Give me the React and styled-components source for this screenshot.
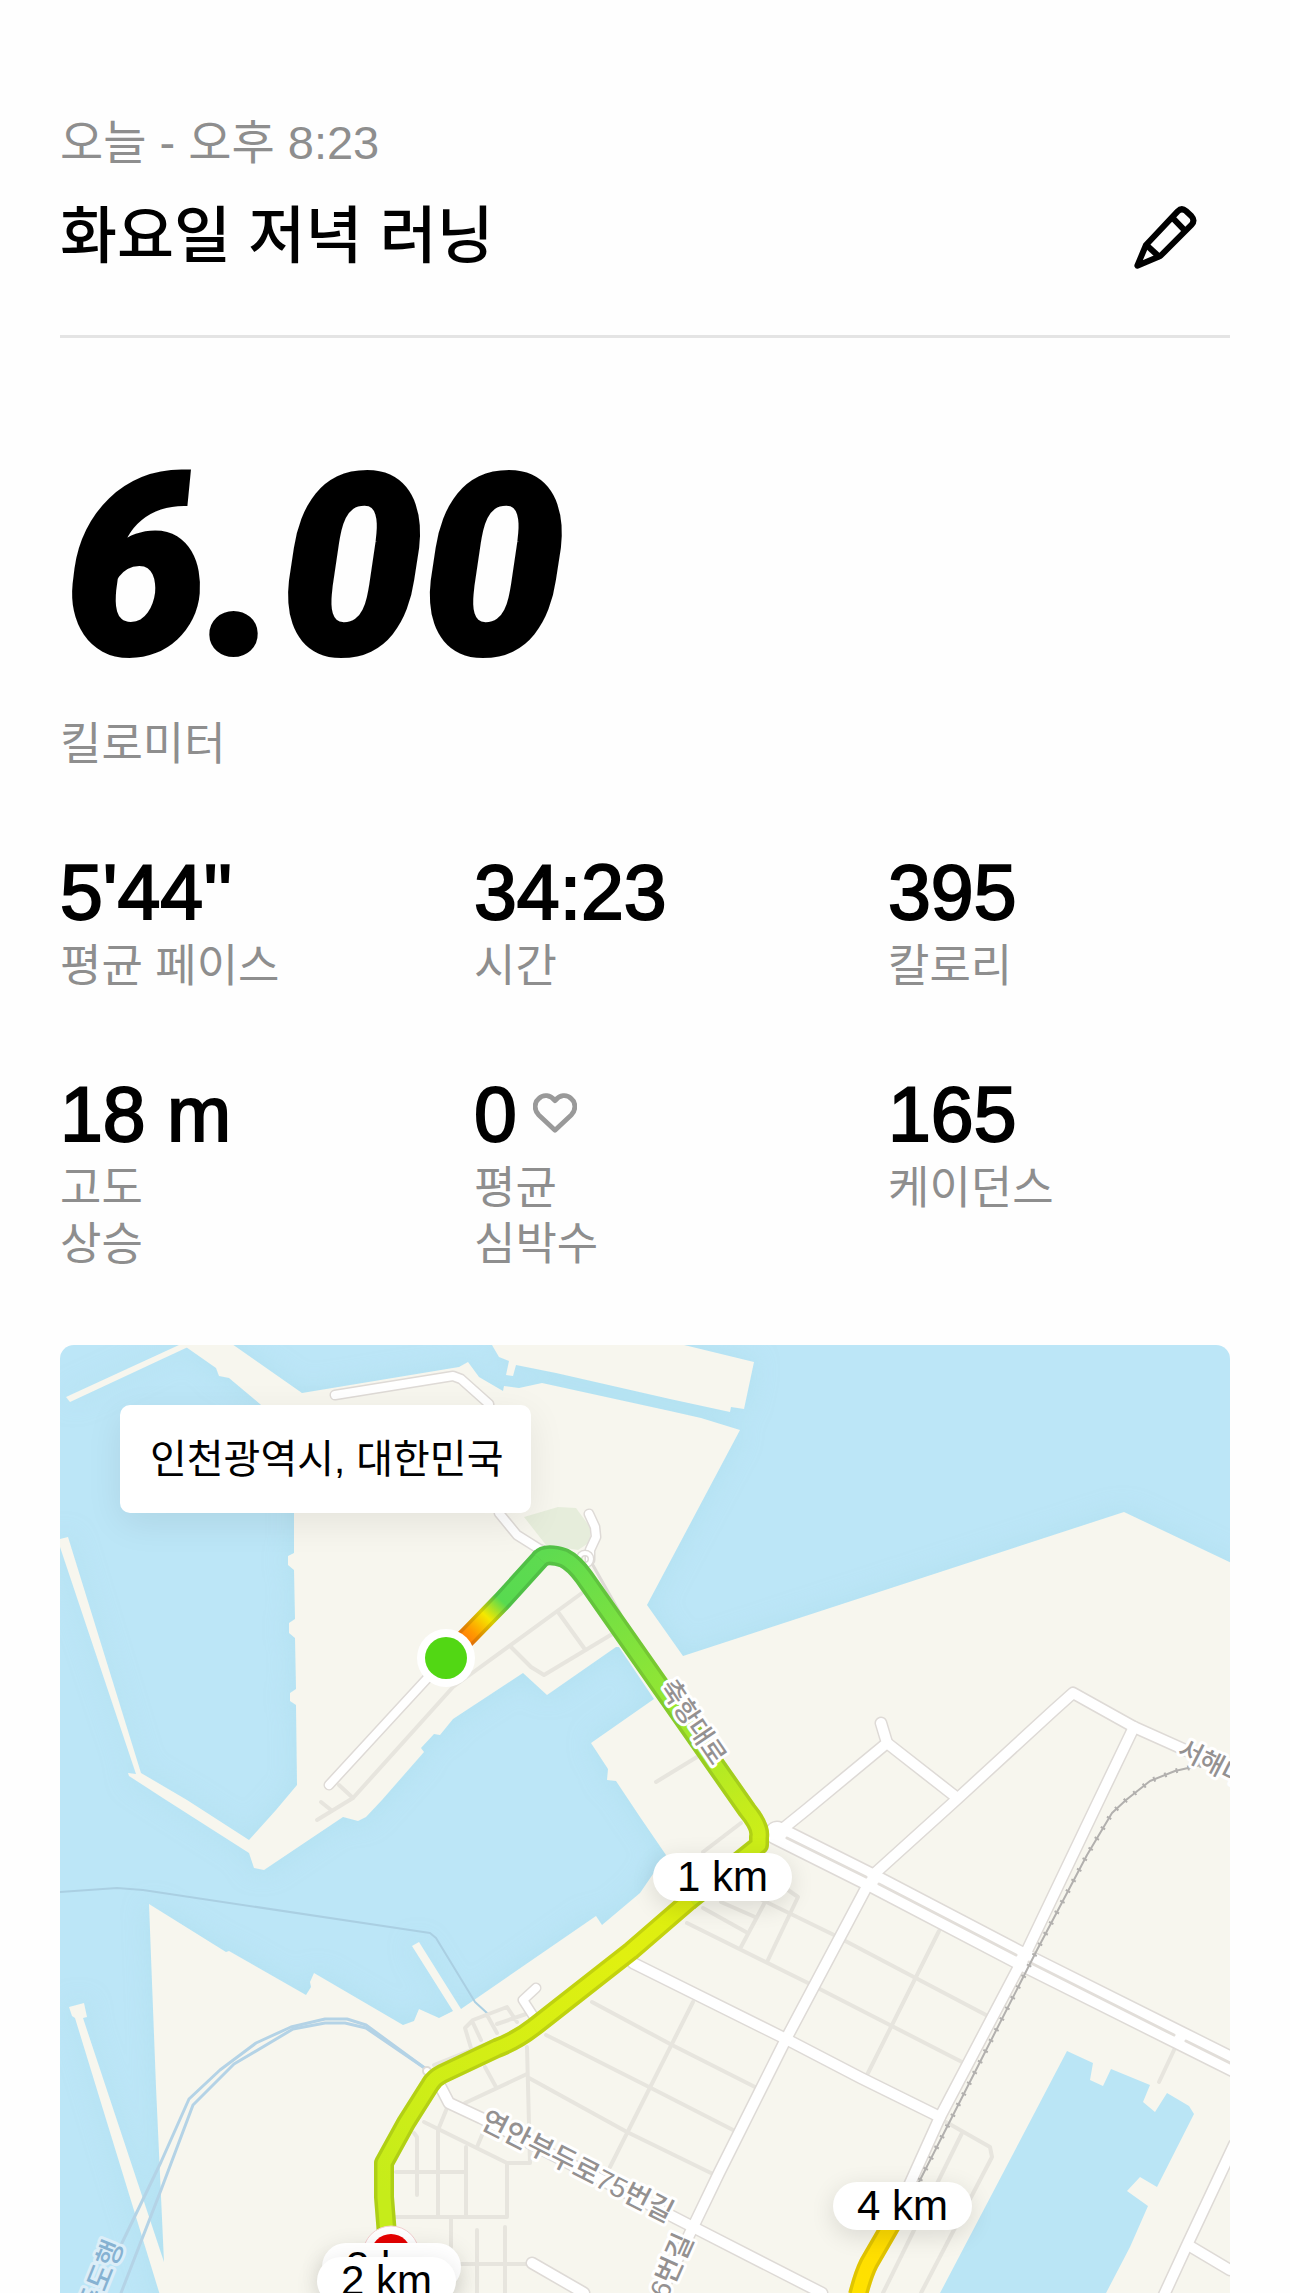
import React from 'react';
import styled, { createGlobalStyle } from 'styled-components';

const GlobalStyle = createGlobalStyle`
  * {
    box-sizing: border-box;
  }

  body {
    margin: 0;
    background: #fefefe;
    color: #000;
    font-family: "Liberation Sans", "Noto Sans CJK KR", sans-serif;
  }
`

const Page = styled.main`
  display: flex;
  flex-direction: column;
  min-height: 100vh;
  padding: 109px 60px 0;
`

const Header = styled.header`
  display: flex;
  align-items: flex-end;
  justify-content: space-between;
  padding-bottom: 50px;
  border-bottom: 3px solid #e4e4e4;
`

const RunDate = styled.p`
  margin: 0;
  font-size: 47px;
  line-height: 68px;
  color: #8e8e8e;
`

const Title = styled.h1`
  margin: 12px 0 0;
  font-size: 62px;
  font-weight: 500;
  line-height: 96px;
`

const EditButton = styled.button`
  display: flex;
  margin: 0 32px 14px 0;
  padding: 0;
  border: none;
  background: transparent;
  cursor: pointer;
`

const Distance = styled.section`
  margin-top: 97px;
`

const DistanceValue = styled.div`
  padding-left: 5px;
  font-family: Roboto, Lato, sans-serif;
  font-size: 252px;
  font-style: italic;
  font-weight: 900;
  line-height: 264px;
  -webkit-text-stroke: 4px #000;
`

const Label = styled.div`
  font-size: 45px;
  line-height: 56px;
  color: #8e8e8e;
  white-space: pre-line;
`

const DistanceLabel = styled(Label)`
  margin-top: 18px;
`

const Stats = styled.section`
  display: grid;
  grid-template-columns: repeat(3, 1fr);
  gap: 79px 72px;
  margin-top: 79px;
`

const StatValue = styled.div`
  display: flex;
  align-items: center;
  gap: 16px;
  margin-bottom: 7px;
  font-size: 77px;
  line-height: 80px;
  -webkit-text-stroke: 2px #000;
`

const MapCard = styled.section`
  position: relative;
  flex: 1;
  min-height: 900px;
  margin-top: 72px;
  border-radius: 14px 14px 0 0;
  background: #bce6f7;
  overflow: hidden;
`

const MapCanvas = styled.svg`
  position: absolute;
  top: 0;
  left: 0;
  width: 100%;
  height: 100%;
`

const Place = styled.div`
  position: absolute;
  top: 60px;
  left: 60px;
  padding: 24px 28px 24px 30px;
  border-radius: 10px;
  background: #fff;
  box-shadow: 0 10px 36px rgba(0, 0, 0, 0.08);
  font-size: 40px;
  line-height: 60px;
`

const Marker = styled.div`
  position: absolute;
  top: ${props => props.$y}px;
  left: ${props => props.$x}px;
  width: 139px;
  border-radius: 24px;
  background: #fff;
  box-shadow: 0 6px 24px rgba(0, 0, 0, 0.12);
  font-size: 42px;
  line-height: 48px;
  text-align: center;
`

const stats = [
  { value: "5'44''", label: '평균 페이스' },
  { value: '34:23', label: '시간' },
  { value: '395', label: '칼로리' },
  { value: '18 m', label: '고도\n상승' },
  { value: '0', label: '평균\n심박수', heart: true },
  { value: '165', label: '케이던스' },
];

const markers = [
  { text: '1 km', x: 593, y: 508 },
  { text: '4 km', x: 773, y: 837 },
  { text: '3 km', x: 262, y: 898 },
  { text: '2 km', x: 257, y: 912 },
];

const land = [
  // breakwater in the top left corner
  'M6 52 L10 57 L128 2 L128 -4 L119 0Z',
  // north pier
  'M432 0 L439 12 L449 16 L446 30 L453 31 L456 20 L496 28 L610 54 L670 67 L671 62 L684 64 L694 17 L620 -1Z',
  // harbour and the mainland
  `M124 -1 L126 2 L156 23 L159 31 L169 33 L200 59 L234 95 L234 208 L228 211 L228 220 L234 225 L235 274
   L229 278 L229 288 L235 293 L236 344 L230 348 L230 356 L236 360 L237 440 L216 465 L189 495 L127 455
   L81 428 L8 192 L-4 195 L0 202 L76 429 L68 428 L69 431 L106 455 L189 508 L194 523 L204 525 L283 472
   L298 476 L306 472 L322 455 L364 407 L361 403 L374 389 L380 390 L393 374 L463 328 L487 350 L556 302
   L559 302 L594 354 L531 398 L548 424 L547 435 L556 436 L580 472 L606 510 L580 548 L542 580 L536 571
   L401 664 L359 597 L352 601 L393 666 L379 673 L359 664 L354 676 L343 680 L254 628 L250 637 L251 642
   L246 650 L169 606 L166 607 L89 559 L96 742 L104 917 L23 673 L27 672 L24 658 L9 662 L12 671 L15 673
   L103 960 L1180 960 L1180 222 L1064 167 L623 311 L587 260 L680 85 L641 73 L610 66 L482 38 L459 43
   L444 41 L443 46 L419 32 L408 17 L399 22 L242 48 L212 27 L172 -1Z`,
];

const dock = `M1007 706 L1033 718 L1030 735 L1043 741 L1051 724 L1090 740 L1083 757 L1095 767 L1107 748
  L1129 761 L1134 769 L1097 842 L1080 832 L1067 846 L1088 861 L1070 902 L1045 950 L879 950Z`;

const lanes = [
  'M279 440 L293 453 L393 342 L522 248',
  'M498 267 L524 303',
  'M451 302 L471 322 L484 330 L554 288',
  'M261 457 L271 465 M257 475 L293 453',
  'M596 437 L637 412',
  'M643 507 L681 478',
  'M728 545 L738 552 L707 617',
  'M705 557 L681 602',
  'M690 549 L774 590 L926 670',
  'M627 578 L748 638 L902 717',
  'M643 563 L686 587',
  'M661 557 L695 572',
  'M879 586 L807 730',
  'M633 657 L550 822',
  'M532 657 L612 700 L695 742',
  'M486 690 L500 697 L591 743 L675 786',
  'M469 733 L567 787 L653 829',
  'M467 702 L470 818 L447 818 L447 872 L334 872',
  'M364 777 L447 818',
  'M405 758 L467 729',
  'M425 722 L436 742',
  'M387 763 L378 785 L378 872',
  'M425 783 L417 802',
  'M354 788 L357 792 L357 850',
  'M406 802 L406 872',
  'M336 827 L405 827',
  'M391 873 L391 902',
  'M417 885 L417 948',
  'M445 882 L445 948',
  'M401 919 L470 919',
  'M374 720 L469 682',
  'M411 703 L405 683 L413 675 L447 662 L457 677 M413 678 L421 695 M427 670 L437 688 M437 679 L469 668',
  'M886 777 L930 802 L932 812 L861 948',
  'M902 788 L823 948',
  'M1115 703 L1099 737',
];

const streets = [
  'M275 50 L393 31 L401 34 L429 59 L439 168 L457 190 L484 207',
  'M529 169 L535 182 L536 192 L530 205 L530 215',
  'M269 440 L386 313 L482 205',
  'M476 643 L463 655 L474 672',
];

const roads = [
  'M720 486 L746 465 L827 398 L821 378',
  'M827 398 L896 452',
  'M813 530 L896 455 L994 365 L1013 348 L1074 382 L1170 425',
  'M1074 382 L1038 457 L964 612 L880 772 L829 885',
  'M813 530 L726 694 L699 748 L659 828 L633 882 L600 950',
  'M573 618 L726 694 L801 733 L880 772',
  'M376 733 L389 758 L421 773 L633 882 L762 948',
  'M1174 800 L1128 898 L1104 950',
  'M1128 900 L1170 925',
  'M472 918 L524 948',
];

const rail = 'M1141 420 L1115 426 L1090 436 L1066 455 L1052 468 L1027 510 L977 605 L859 837';

const route = [
  { id: 'a', d: 'M386 313 L409 290 L443 255 L482 212' },
  { id: 'b', d: 'M480 214 Q486 207 504 213 Q514 218 524 232 L687 465 Q701 482 699 492 L699 500 L629 556' },
  { id: 'c', d: 'M630 555 L571 606 L474 682 Q456 696 437 703 L382 729 Q374 733 370 740 L346 778 L324 818 L324 852 L327 890' },
  { id: 'd', d: 'M831 880 L809 918 Q803 930 798 950' },
];

function PencilIcon() {
  return (
    <svg width="66" height="67" viewBox="66 69 198 201" fill="none" stroke="#000" strokeWidth="18" strokeLinejoin="round" strokeLinecap="round" aria-hidden="true">
      <path d="M82 254 L108 192 L203 91 Q215 79 228 90 L244 105 Q256 118 245 131 L151 225Z" />
      <path d="M187 110 L224 148" />
      <path d="M110 193 L146 226" />
    </svg>
  );
}

function HeartIcon() {
  return (
    <svg width="44" height="42" viewBox="0 0 46 42" fill="none" stroke="#999" strokeWidth="5" strokeLinejoin="round" aria-hidden="true">
      <path d="M23 38 L6 22 C1 17 1 9 6 5 C11 0 18 1 23 7 C28 1 35 0 40 5 C45 9 45 17 40 22Z" />
    </svg>
  );
}

function RouteMap() {
  return (
    <MapCanvas viewBox="0 0 1170 948" preserveAspectRatio="xMidYMin slice" aria-hidden="true">
      <defs>
        <filter id="shore" x="-10%" y="-10%" width="120%" height="120%" colorInterpolationFilters="sRGB">
          <feDropShadow dx="0" dy="0" stdDeviation="12" floodColor="#a8dcea" floodOpacity="0.5" />
        </filter>
        <linearGradient id="a" gradientUnits="userSpaceOnUse" x1="400" y1="300" x2="482" y2="210">
          <stop offset="0" stopColor="#ff6a10" />
          <stop offset="0.15" stopColor="#ff9a00" />
          <stop offset="0.32" stopColor="#f4e800" />
          <stop offset="0.5" stopColor="#58da50" />
          <stop offset="1" stopColor="#5edb50" />
        </linearGradient>
        <linearGradient id="b" gradientUnits="userSpaceOnUse" x1="482" y1="210" x2="690" y2="500">
          <stop offset="0" stopColor="#5edb50" />
          <stop offset="0.5" stopColor="#90e634" />
          <stop offset="0.9" stopColor="#c4ec1c" />
          <stop offset="1" stopColor="#ccee18" />
        </linearGradient>
        <linearGradient id="c" gradientUnits="userSpaceOnUse" x1="629" y1="556" x2="324" y2="850">
          <stop offset="0" stopColor="#dcee10" />
          <stop offset="0.2" stopColor="#e0f010" />
          <stop offset="1" stopColor="#c6ec1a" />
        </linearGradient>
        <linearGradient id="d" gradientUnits="userSpaceOnUse" x1="829" y1="885" x2="798" y2="950">
          <stop offset="0" stopColor="#ffdc00" />
          <stop offset="1" stopColor="#ffe200" />
        </linearGradient>
      </defs>

      <g fill="#f7f6ee" filter="url(#shore)">
        {land.map(d => <path key={d} d={d} />)}
      </g>
      <path d={dock} fill="#bae5f5" />
      <path d="M464 172 L498 162 L516 163 L530 182 L530 197 L518 205 L486 200Z" fill="#e6eddb" />

      <g fill="none" strokeLinejoin="round" strokeLinecap="round">
        <path d="M0 547 L57 543 L83 545 L370 588 L376 593 L415 657 L427 668" stroke="#aacfe2" strokeWidth="2" />
        <g stroke="#b4d3e6" strokeWidth="3">
          <path d="M366 724 L306 680 L287 674 L265 674 L231 682 L196 698 L160 725 L129 754 L101 817 L61 900" />
          <path d="M366 724 L306 683 L285 678 L265 678 L233 684 L174 719 L133 760 L101 845 L61 948" />
        </g>

        <g stroke="#e7e5de" strokeWidth="4">
          {lanes.map(d => <path key={d} d={d} />)}
        </g>
        <path d="M530 215 L560 268" stroke="#dedad6" strokeWidth="3" />

        <g stroke="#dedad6">
          {streets.map(d => <path key={d} d={d} strokeWidth="11" />)}
          {roads.map(d => <path key={d} d={d} strokeWidth="13" />)}
          <path d="M717 488 L813 536 L962 614 L1120 693 L1176 721" strokeWidth="25" />
        </g>
        <g stroke="#fff">
          {streets.map(d => <path key={d} d={d} strokeWidth="8" />)}
          {roads.map(d => <path key={d} d={d} strokeWidth="10" />)}
          <path d="M717 488 L813 536 L962 614 L1120 693 L1176 721" strokeWidth="22" />
        </g>
        <circle cx="525" cy="214" r="6" stroke="#dedad6" strokeWidth="7" />
        <circle cx="525" cy="214" r="6" stroke="#fff" strokeWidth="4" />
        <circle cx="367" cy="726" r="4" stroke="#dedad6" strokeWidth="2" fill="#fff" />
        <path d="M727 493 L806 532 M819 539 L956 610 M969 617 L1114 690 M1126 696 L1170 718" stroke="#e2ded9" strokeWidth="3" />

        <path d={rail} stroke="#b2b0ae" strokeWidth="2" />
        <path d={rail} stroke="#b2b0ae" strokeWidth="5" strokeDasharray="2 10" strokeLinecap="butt" />

        {route.map(({ id, d }) => (
          <g key={id} strokeLinecap="butt">
            <path d={d} stroke={`url(#${id})`} strokeWidth="20" />
            <path d={d} stroke="#000" strokeOpacity="0.12" strokeWidth="20" />
            <path d={d} stroke={`url(#${id})`} strokeWidth="13" />
          </g>
        ))}
      </g>

      <g fill="#949191" stroke="#fff" strokeWidth="6" strokeLinejoin="round" paintOrder="stroke" fontSize="28" fontWeight="500" textAnchor="middle">
        <text transform="translate(626 382) rotate(56)" fontSize="26">축항대로</text>
        <text transform="translate(513 830) rotate(27)">연안부두로75번길</text>
        <text transform="translate(1116 410) rotate(27)" fontSize="26" textAnchor="start">서해대로</text>
        <text transform="translate(634 894) rotate(-66)" textAnchor="end">6번길</text>
        <text transform="translate(64 900) rotate(-68)" textAnchor="end" fill="#86b2d2" stroke="#dceef8">제주도행</text>
      </g>

      <circle cx="386" cy="313" r="29" fill="#fff" />
      <circle cx="386" cy="313" r="21" fill="#52d714" />
      <circle cx="331" cy="909" r="28" fill="#fff" stroke="#f3d0d0" strokeWidth="1" />
      <circle cx="331" cy="909" r="20" fill="#e60000" />
    </MapCanvas>
  );
}

function Stat({ value, label, heart }) {
  return (
    <div>
      <StatValue>
        {value}
        {heart && <HeartIcon />}
      </StatValue>
      <Label>{label}</Label>
    </div>
  );
}

export default function App() {
  return (
    <>
      <GlobalStyle />
      <Page>
        <Header>
          <div>
            <RunDate>오늘 - 오후 8:23</RunDate>
            <Title>화요일 저녁 러닝</Title>
          </div>
          <EditButton type="button" aria-label="편집">
            <PencilIcon />
          </EditButton>
        </Header>
        <Distance>
          <DistanceValue>6.00</DistanceValue>
          <DistanceLabel>킬로미터</DistanceLabel>
        </Distance>
        <Stats>
          {stats.map(stat => <Stat key={stat.label} {...stat} />)}
        </Stats>
        <MapCard>
          <RouteMap />
          <Place>인천광역시, 대한민국</Place>
          {markers.map(({ text, x, y }) => (
            <Marker key={text} $x={x} $y={y}>{text}</Marker>
          ))}
        </MapCard>
      </Page>
    </>
  );
}
